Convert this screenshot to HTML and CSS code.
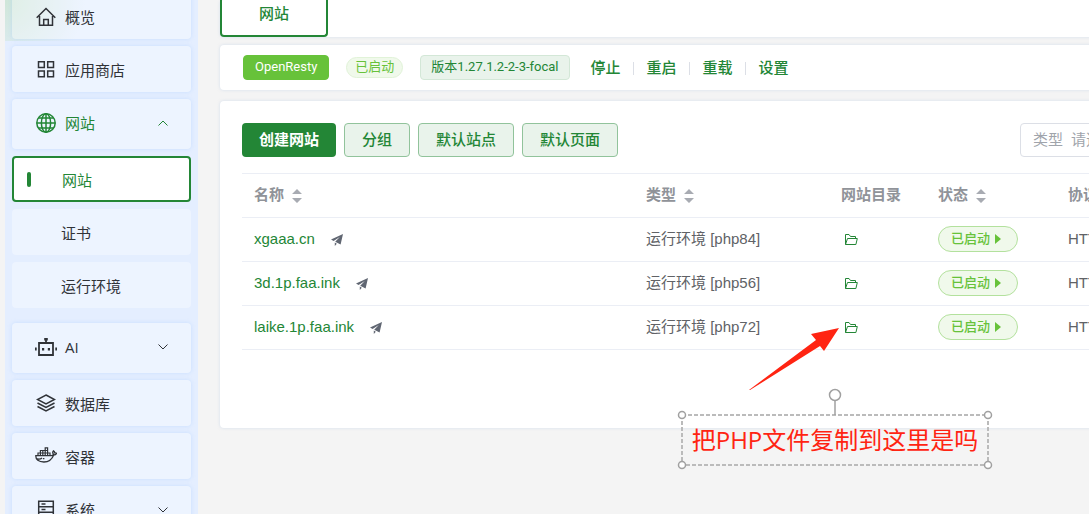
FILE: index.html
```html
<!DOCTYPE html>
<html lang="zh-CN">
<head>
	<meta charset="UTF-8">
	<meta name="viewport" content="width=device-width, initial-scale=1">
	<title>网站</title>
	<link rel="stylesheet" href="styles.css">
</head>
<body>
<!-- 公用图标 -->
<svg class="sprite" aria-hidden="true">
	<symbol id="i-plane" viewBox="0 0 12 12">
		<path d="M12 0L0 5.6l2.6 1.5L8.8 3 4.2 7.8 9.6 10.6zM3.8 8.6V12l2-2.3z"/>
	</symbol>
	<symbol id="i-folder" viewBox="0 0 14 13">
		<path d="M1.5 11.5V1.5H5l1.5 2h5v2M1.5 11.5l2-6h9.8l-1.4 6z"/>
	</symbol>
	<symbol id="i-sort" viewBox="0 0 10 14">
		<path d="M0 5l5-5 5 5zM0 9h10l-5 5z"/>
	</symbol>
	<symbol id="i-down" viewBox="0 0 10 6">
		<path d="M.5.5L5 5 9.5.5"/>
	</symbol>
</svg>

<div class="layout">
	<nav class="sidebar">
		<ul class="menu">
			<li><a class="item" href="#">
				<svg class="icon" viewBox="0 0 20 20"><path d="M.7 10.8L10 1.5l9.3 9.3M3.5 9v9.2h13V9M7.7 18v-5.5h4.6V18"/></svg>
				<span>概览</span>
			</a></li>
			<li><a class="item" href="#">
				<svg class="icon" viewBox="0 0 20 20"><path d="M2.5 1.8h5.8v5.8H2.5zM11.7 1.8h5.8v5.8h-5.8zM2.5 11h5.8v5.8H2.5zM11.7 11h5.8v5.8h-5.8z"/></svg>
				<span>应用商店</span>
			</a></li>
			<li>
				<a class="item parent open" href="#">
					<svg class="icon" viewBox="0 0 20 20"><circle cx="10" cy="10" r="9.2"/><ellipse cx="10" cy="10" rx="4.6" ry="9.2"/><path d="M10 .8v18.4M.8 10h18.4M2.7 5h14.6M2.7 15h14.6"/></svg>
					<span>网站</span>
					<svg class="arrow"><use href="#i-down"/></svg>
				</a>
				<ul class="submenu">
					<li><a class="item active" href="#">网站</a></li>
					<li><a class="item" href="#">证书</a></li>
					<li><a class="item" href="#">运行环境</a></li>
				</ul>
			</li>
			<li><a class="item parent" href="#">
				<svg class="icon wide" viewBox="0 0 22 20"><path d="M4 6h14v12H4zM11 6V2M.8 10.5v3M21.2 10.5v3" stroke-width="1.8"/><path class="fill" d="M9.2 1h3.6v2.4H9.2zM7 11h2.2v2.4H7zM12.8 11H15v2.4h-2.2z"/></svg>
				<span>AI</span>
				<svg class="arrow"><use href="#i-down"/></svg>
			</a></li>
			<li><a class="item" href="#">
				<svg class="icon" viewBox="0 0 20 20"><path d="M10 1l8.5 4.5L10 10 1.5 5.5zM1.5 9L10 13.5 18.5 9M1.5 12.5L10 17l8.5-4.5"/></svg>
				<span>数据库</span>
			</a></li>
			<li><a class="item" href="#">
				<svg class="icon wide" viewBox="0 0 22 20"><path d="M.8 8.7h15.6c1 0 1.8-.6 2-1.6-.9-1-.8-2.2 0-3.2.9.6 1.3 1.2 1.4 2 .7-.1 1.3 0 1.8.4-.5 1.2-1.5 1.7-2.9 1.7-1.8 4.6-5.1 7-9.8 7C3.7 15 .6 12.7.8 8.7zM1.5 11.5c2.5 1 4.5.3 5.6-.6" stroke-width="1.3"/><path d="M3 8.5V6h12v2.5M5.4 8.5v-5h7.2v5M7.8 8.5v-5M10.2 8.5V.8h2.4v3M5.4 6h7.2" stroke-width="1.2"/><path class="fill" d="M8 11h1.4v1.3H8z"/></svg>
				<span>容器</span>
			</a></li>
			<li><a class="item parent" href="#">
				<svg class="icon" viewBox="0 0 20 20"><path d="M2.7 1.2h14.6v16.6H2.7zM2.7 6.7h14.6M2.7 12.2h14.6M5.5 4h4M5.5 9.5h4M5.5 15h4"/></svg>
				<span>系统</span>
				<svg class="arrow"><use href="#i-down"/></svg>
			</a></li>
		</ul>
	</nav>

	<main class="main">
		<div class="content">
			<div class="card tabs">
				<a class="tab" href="#">网站</a>
			</div>

			<div class="card status">
				<span class="tag tag-app">OpenResty</span>
				<span class="tag tag-round">已启动</span>
				<span class="tag tag-version">版本1.27.1.2-2-3-focal</span>
				<div class="actions">
					<button type="button">停止</button>
					<button type="button">重启</button>
					<button type="button">重载</button>
					<button type="button">设置</button>
				</div>
			</div>

			<div class="card panel">
				<div class="toolbar">
					<button type="button" class="btn btn-primary">创建网站</button>
					<button type="button" class="btn">分组</button>
					<button type="button" class="btn">默认站点</button>
					<button type="button" class="btn">默认页面</button>
					<div class="filter">
						<label for="type">类型</label>
						<select id="type"><option>请选择</option></select>
					</div>
				</div>
				<table class="sites">
					<thead>
						<tr>
							<th class="c-name">名称<svg class="sort"><use href="#i-sort"/></svg></th>
							<th class="c-type">类型<svg class="sort"><use href="#i-sort"/></svg></th>
							<th class="c-dir">网站目录</th>
							<th class="c-status">状态<svg class="sort"><use href="#i-sort"/></svg></th>
							<th>协议</th>
						</tr>
					</thead>
					<tbody>
						<tr>
							<td><a href="#">xgaaa.cn</a><svg class="plane"><use href="#i-plane"/></svg></td>
							<td>运行环境 [php84]</td>
							<td><button type="button" class="folder" aria-label="目录"><svg><use href="#i-folder"/></svg></button></td>
							<td><button type="button" class="state">已启动</button></td>
							<td>HTTP</td>
						</tr>
						<tr>
							<td><a href="#">3d.1p.faa.ink</a><svg class="plane"><use href="#i-plane"/></svg></td>
							<td>运行环境 [php56]</td>
							<td><button type="button" class="folder" aria-label="目录"><svg><use href="#i-folder"/></svg></button></td>
							<td><button type="button" class="state">已启动</button></td>
							<td>HTTP</td>
						</tr>
						<tr>
							<td><a href="#">laike.1p.faa.ink</a><svg class="plane"><use href="#i-plane"/></svg></td>
							<td>运行环境 [php72]</td>
							<td><button type="button" class="folder" aria-label="目录"><svg><use href="#i-folder"/></svg></button></td>
							<td><button type="button" class="state">已启动</button></td>
							<td>HTTP</td>
						</tr>
					</tbody>
				</table>
			</div>
		</div>
	</main>
</div>

<!-- 标注 -->
<svg class="mark-arrow" viewBox="0 0 92 64"><path d="M0 63L67 13 62 7 90 1 75 24 71 19 1 63z"/></svg>
<div class="mark">
	<svg class="mark-frame">
		<rect class="dash" x="0" y="0" width="100%" height="100%"/>
		<path d="M153 0v-14"/>
		<circle cx="50%" cy="-20" r="5.5"/>
		<circle cx="0" cy="0" r="3.5"/>
		<circle cx="100%" cy="0" r="3.5"/>
		<circle cx="0" cy="100%" r="3.5"/>
		<circle cx="100%" cy="100%" r="3.5"/>
	</svg>
	把PHP文件复制到这里是吗
</div>
</body>
</html>
```
FILE: styles.css
```css
*{margin: 0;padding: 0;box-sizing: border-box;}
html,body{height: 100%;}
body{
	position: relative;
	overflow: hidden;
	background: #f4f4f4;
	color: #606266;
	font: 15px/20px "Liberation Sans", "Noto Sans CJK SC", sans-serif;
}
a{color: #238636;text-decoration: none;}
ul{list-style: none;}
button{border: 0;background: none;font: inherit;color: inherit;cursor: pointer;}
.sprite{position: absolute;width: 0;height: 0;}
.layout{display: flex;height: 100%;padding-left: 5px;}

/* 侧边栏 */
.sidebar{
	flex: none;
	width: 193px;
	padding: 0 7px;
	overflow: hidden;
	background: radial-gradient(circle at 0 0, #cfe6d8, rgba(228, 238, 255, 0) 80px) 0 0 / 100% 41px no-repeat, #e4eeff;
	font-family: "Open Sans", "Noto Sans CJK SC", sans-serif;
}
.menu{display: flex;flex-direction: column;gap: 7px;margin-top: -7px;}
.item{
	display: flex;
	align-items: center;
	gap: 9px;
	height: 46px;
	padding: 1px 23px 0;
	border-radius: 4px;
	background: rgba(255, 255, 255, 0.34);
	box-shadow: 0 0 4px rgba(160, 200, 255, 0.4);
	color: #303338;
}
.item.parent{height: 50px;padding: 0 23px 2px;}
.item.open{color: #238636;}
.icon{
	flex: none;
	width: 20px;
	height: 20px;
	margin-left: 1px;
	fill: none;
	stroke: currentColor;
	stroke-width: 1.5;
}
.icon.wide{width: 22px;margin: 0 -1px 0 0;}
.icon .fill{fill: currentColor;stroke: none;}
.arrow{width: 10px;height: 6px;margin-left: auto;fill: none;stroke: currentColor;}
.open .arrow{transform: rotate(180deg);}
.submenu{display: flex;flex-direction: column;gap: 7px;padding: 7px 0 8px;}
.submenu .item{padding-left: 49px;box-shadow: none;}
.submenu .active{
	gap: 31px;
	padding-left: 13px;
	border: 2px solid #238636;
	background: #fff;
	color: #238636;
}
.active::before{
	content: "";
	width: 4px;
	height: 15px;
	border-radius: 2px;
	background: #238636;
}

/* 主区域 */
.main{flex: 1;min-width: 0;padding-left: 22px;overflow: hidden;}
.content{min-width: 1062px;}
.card{
	border-radius: 4px;
	background: #fff;
	box-shadow: 0 0 3px rgba(180, 200, 230, 0.5);
}
.tabs{display: flex;height: 37px;}
.tab{
	width: 108px;
	padding-top: 4px;
	border: 2px solid #238636;
	border-top: 0;
	border-radius: 0 0 4px 4px;
	text-align: center;
	font-weight: 500;
}
.status{
	display: flex;
	align-items: center;
	gap: 17px;
	height: 45px;
	margin-top: 8px;
	padding: 0 23px;
}
.tag{
	padding: 0 10px 1px;
	border: 1px solid #67c23a;
	border-radius: 4px;
	font: 13px/22px Roboto, "Noto Sans CJK SC", sans-serif;
}
.tag-app{padding: 0 11px 1px;background: #67c23a;color: #fff;}
.tag-round{
	padding: 0 8px 1px;
	border-color: #e1f3d8;
	border-radius: 11px;
	background: #f0f9eb;
	color: #67c23a;
	line-height: 18px;
}
.tag-version{border-color: #d3e7d7;background: #e9f3eb;color: #238636;}
.actions{display: flex;align-items: center;color: #238636;font-weight: 500;}
.actions button{padding: 0 13px;}
.actions button:first-child{padding-left: 4px;}
.actions button + button::before{
	content: "";
	float: left;
	width: 1px;
	height: 13px;
	margin: 4px 0 0 -14px;
	background: #dcdfe6;
}

.panel{height: 327px;margin-top: 11px;padding: 22px;}
.toolbar{display: flex;gap: 8px;}
.btn{
	height: 34px;
	padding: 0 17px;
	border: 1px solid #91c39b;
	border-radius: 4px;
	background: #e9f3eb;
	color: #238636;
	font-weight: 500;
}
.btn-primary{border: 0;background: #238636;color: #fff;font-weight: 700;}
.filter{
	display: flex;
	align-items: center;
	gap: 8px;
	width: 240px;
	height: 34px;
	margin-left: auto;
	padding: 0 12px;
	border: 1px solid #dcdfe6;
	border-radius: 4px;
	color: #a0a4ab;
}
.filter select{flex: 1;border: 0;background: none;font: inherit;color: inherit;appearance: none;}

/* 网站列表 */
.sites{
	width: 100%;
	margin-top: 16px;
	border-top: 1px solid #ebeef5;
	border-collapse: collapse;
	table-layout: fixed;
}
.sites th,.sites td{
	height: 44px;
	padding: 0 12px 1px;
	border-bottom: 1px solid #ebeef5;
	text-align: left;
	white-space: nowrap;
}
.sites th{padding-bottom: 2px;color: #909399;}
.c-name{width: 392px;}
.c-type{width: 195px;}
.c-dir{width: 97px;}
.c-status{width: 130px;}
.sort{width: 10px;height: 14px;margin-left: 8px;vertical-align: -3px;fill: #a8abb2;}
.plane{width: 12px;height: 12px;margin-left: 16px;vertical-align: -2px;fill: #606672;}
.folder{display: block;padding: 1px 3px 0;}
.folder svg{display: block;width: 14px;height: 13px;fill: none;stroke: #238636;}
.state{
	display: flex;
	align-items: center;
	gap: 5px;
	height: 26px;
	padding: 0 16px 1px 12px;
	border: 1px solid #b3e19d;
	border-radius: 13px;
	background: #f0f9eb;
	color: #67c23a;
	font-size: 13px;
	font-weight: 500;
}
.state::after{
	content: "";
	border: 5px solid transparent;
	border-right: 0;
	border-left: 6px solid #67c23a;
}

/* 标注 */
.mark-arrow{position: absolute;left: 749px;top: 327px;width: 92px;height: 64px;fill: #ff2412;}
.mark{
	position: absolute;
	left: 682px;
	top: 415px;
	width: 306px;
	height: 50px;
	color: #ff2412;
	font: 24px/50px "Open Sans", "Noto Sans CJK SC", sans-serif;
	text-align: center;
	white-space: nowrap;
}
.mark-frame{
	position: absolute;
	left: 0;
	top: 0;
	width: 100%;
	height: 100%;
	overflow: visible;
	fill: #fff;
	stroke: #a0a0a0;
	stroke-width: 1.5;
}
.mark-frame .dash{fill: none;stroke: #bbb;stroke-width: 2;stroke-dasharray: 4 2;}
```
